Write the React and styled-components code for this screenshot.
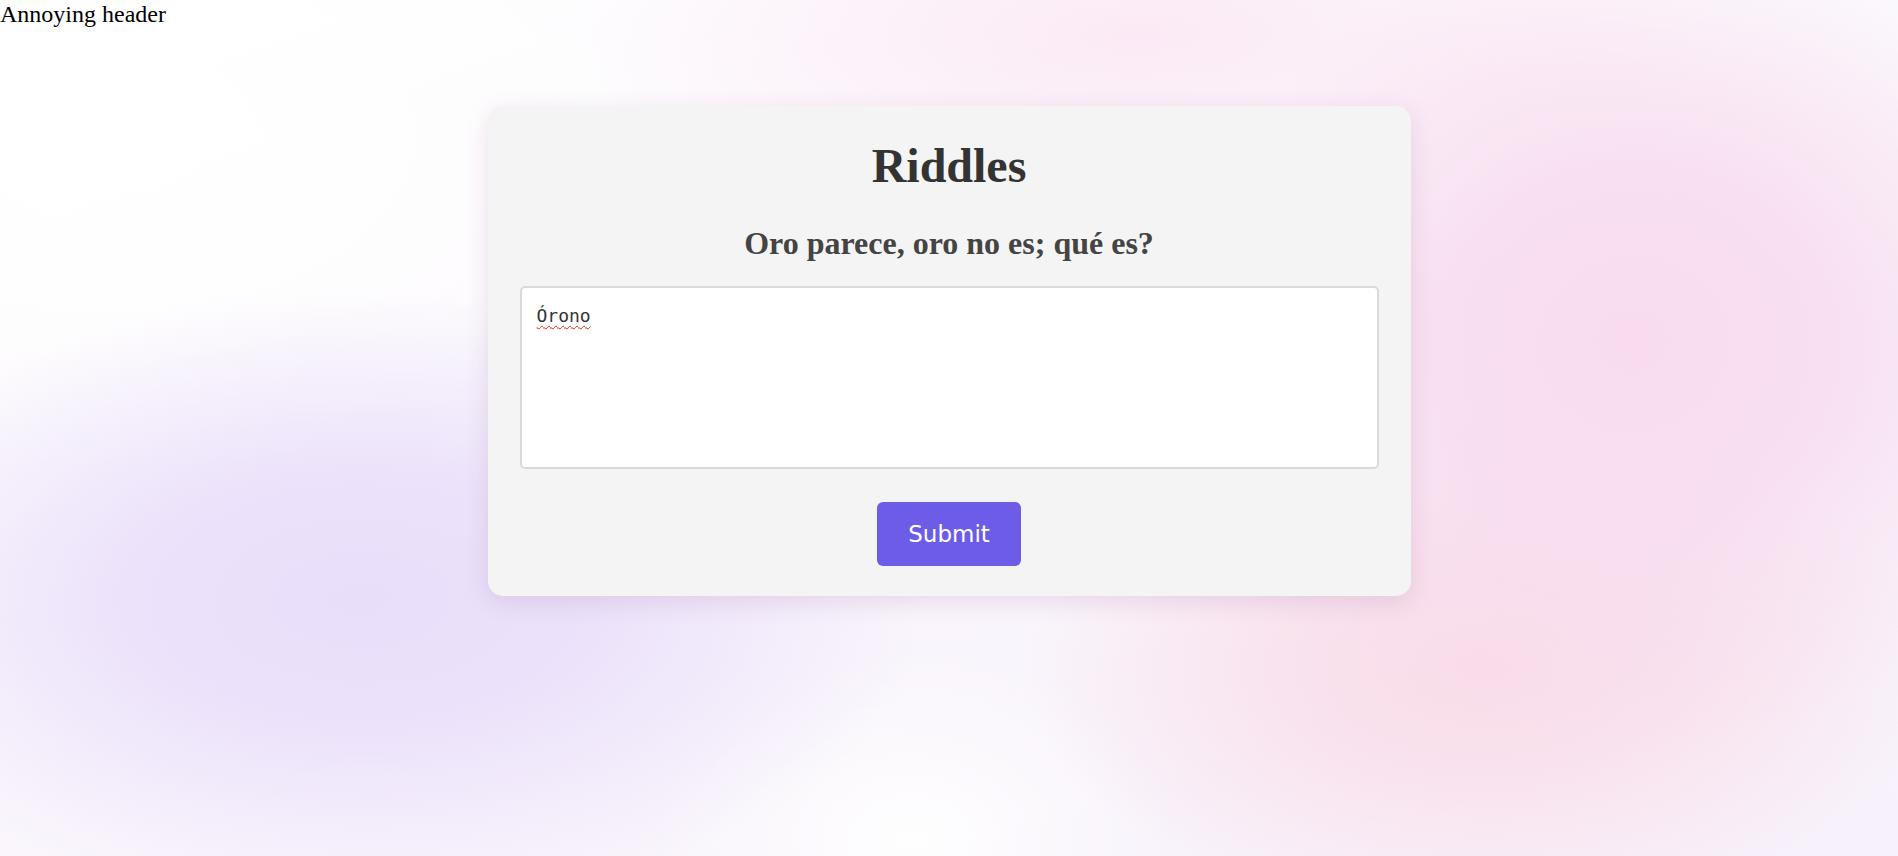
import React, { useState } from 'react';
import styled, { createGlobalStyle } from 'styled-components';

const GlobalStyle = createGlobalStyle`
  html, body {
    margin: 0;
    padding: 0;
    min-height: 100%;
  }
  body {
    font-family: 'Liberation Serif', 'Times New Roman', serif;
  }
`;

// soft blurred blobs behind the card
const PageStyles = styled.div`
  min-height: 100vh;
  background-color: #fcfafd;
  background-image:
    radial-gradient(ellipse 30% 36% at 19% 70%, rgba(233, 222, 250, 1) 0%, rgba(233, 222, 250, 0.85) 40%, rgba(233, 222, 250, 0) 100%),
    radial-gradient(ellipse 24% 48% at 86% 40%, rgba(248, 219, 238, 1) 0%, rgba(248, 219, 238, 0.8) 45%, rgba(248, 219, 238, 0) 100%),
    radial-gradient(ellipse 24% 30% at 78% 78%, rgba(249, 220, 232, 1) 0%, rgba(249, 220, 232, 0.7) 45%, rgba(249, 220, 232, 0) 100%),
    radial-gradient(ellipse 30% 22% at 60% 4%, rgba(251, 232, 244, 0.9), rgba(251, 232, 244, 0) 100%),
    radial-gradient(ellipse 14% 22% at 48% 98%, rgba(255, 255, 255, 0.9), rgba(255, 255, 255, 0) 100%),
    radial-gradient(ellipse 32% 42% at 6% 16%, rgba(255, 255, 255, 1), rgba(255, 255, 255, 0) 100%),
    linear-gradient(160deg, #ffffff 0%, #faf6fc 55%, #f7f1fb 100%);
`;

const HeaderText = styled.div`
  font-size: 24px;
  line-height: 28px;
  color: #000;
`;

const Card = styled.div`
  width: 923px;
  box-sizing: border-box;
  margin: 78px auto 0;
  padding: 32px 32px 30px;
  background-color: #f4f4f4;
  border-radius: 15px;
  box-shadow: 0 6px 24px rgba(120, 60, 110, 0.14);
  display: flex;
  flex-direction: column;
  align-items: center;
`;

const Title = styled.h1`
  margin: 0 0 32px;
  font-size: 48px;
  font-weight: 700;
  color: #333;
  text-align: center;
`;

const Question = styled.h2`
  margin: 0 0 24px;
  font-size: 32px;
  font-weight: 700;
  color: #444;
  text-align: center;
`;

const Answer = styled.textarea`
  display: block;
  width: 100%;
  height: 183px;
  box-sizing: border-box;
  padding: 17px 15px;
  border: 2px solid #dadada;
  border-radius: 5px;
  background: #fff;
  resize: none;
  outline: none;
  font-family: 'DejaVu Sans Mono', 'Liberation Mono', monospace;
  font-size: 18px;
  color: #333;
  text-decoration: underline wavy #e0201b;
  text-decoration-thickness: 1px;
  text-underline-offset: 3px;
`;

const Button = styled.button`
  margin-top: 33px;
  padding: 18px 31px;
  border: none;
  border-radius: 6px;
  background-color: #6c5ce7;
  color: #fff;
  font-family: 'DejaVu Sans', Verdana, sans-serif;
  font-size: 23px;
  line-height: 28px;
  cursor: pointer;
`;

const App = () => {
  const [answer, setAnswer] = useState('Órono');

  return (
    <PageStyles>
      <GlobalStyle />
      <HeaderText>Annoying header</HeaderText>
      <Card>
        <Title>Riddles</Title>
        <Question>Oro parece, oro no es; qué es?</Question>
        <Answer value={answer} onChange={(e) => setAnswer(e.target.value)} />
        <Button>Submit</Button>
      </Card>
    </PageStyles>
  );
};

export default App;
